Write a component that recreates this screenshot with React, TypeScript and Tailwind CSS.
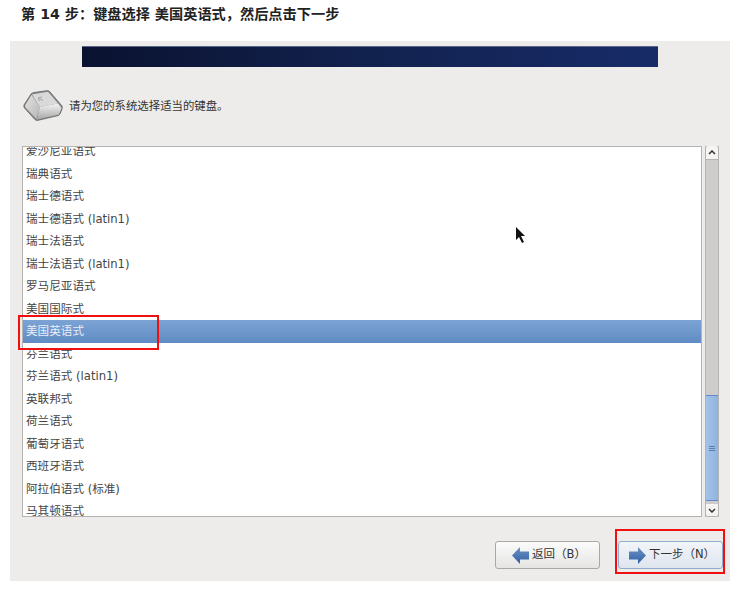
const rows = [
  '爱沙尼亚语式',
  '瑞典语式',
  '瑞士德语式',
  '瑞士德语式 (latin1)',
  '瑞士法语式',
  '瑞士法语式 (latin1)',
  '罗马尼亚语式',
  '美国国际式',
  '美国英语式',
  '芬兰语式',
  '芬兰语式 (latin1)',
  '英联邦式',
  '荷兰语式',
  '葡萄牙语式',
  '西班牙语式',
  '阿拉伯语式 (标准)',
  '马其顿语式',
]

const KeyIcon = () => (
  <svg width="40" height="31" viewBox="0 0 40 31">
    <defs>
      <linearGradient id="keyFront" x1="0" y1="0" x2="0" y2="1">
        <stop offset="0" stopColor="#f4f4f4" />
        <stop offset="1" stopColor="#a6a6a6" />
      </linearGradient>
      <linearGradient id="keySide" x1="0" y1="0" x2="1" y2="1">
        <stop offset="0" stopColor="#e4e4e4" />
        <stop offset="1" stopColor="#b4b4b4" />
      </linearGradient>
    </defs>
    <path d="M1 15 L8 4 Q9 3 11 2.5 L24 0.7 Q26 0.5 27 2 L39 16 Q39.6 17 39 19 L37 24 Q36.5 25 35 25.6 L15 30.3 Q13 30.7 12 29.6 L1.5 18 Q0.6 17 1 15 Z" fill="#8a8a8a" stroke="#5c5c5c" strokeWidth="0.8" />
    <path d="M2 15.5 L8.5 5 L17 17 L13.5 29 L2.5 17.5 Z" fill="url(#keySide)" />
    <path d="M9 4.5 L25 1.8 L35 13.5 L17 17 Z" fill="#d9d9d9" />
    <path d="M17 17 L35 13.5 L38.5 18 L36 24.5 L14 29.6 Z" fill="url(#keyFront)" />
    <path d="M15 8 L19 7 M15.5 8 L16.5 11 M17 9 L20 10.5" stroke="#9a9a9a" strokeWidth="0.9" fill="none" />
  </svg>
)

const ArrowIcon = ({ dir }: { dir: 'left' | 'right' }) => (
  <svg width="17" height="17" viewBox="0 0 17 17">
    <defs>
      <linearGradient id={`arrow-${dir}`} x1="0" y1="0" x2="0" y2="1">
        <stop offset="0" stopColor="#6f94c6" />
        <stop offset="1" stopColor="#2f5fa3" />
      </linearGradient>
    </defs>
    <path
      d={dir === 'left' ? 'M0 8.5 L8 0 L8 4.5 L17 4.5 L17 12.5 L8 12.5 L8 17 Z' : 'M17 8.5 L9 0 L9 4.5 L0 4.5 L0 12.5 L9 12.5 L9 17 Z'}
      fill={`url(#arrow-${dir})`}
    />
  </svg>
)

const App = () => {
  return (
    <div className="relative h-[593px] w-[749px] overflow-hidden bg-white font-['DejaVu_Sans','Noto_Sans_CJK_SC',sans-serif]">
      <h1 className="h-[41px] pl-[21px] pt-[5px] text-[14.2px] font-bold leading-[18px] text-[#222]">
        第 14 步：键盘选择 美国英语式，然后点击下一步
      </h1>

      <div className="ml-[10px] flex h-[540px] w-[720px] flex-col bg-[#edecea]">
        <div className="ml-[72px] mt-[5px] h-[21px] w-[576px] border-t border-[#5a6788] bg-gradient-to-r from-[#0a1230] via-[#12224f] to-[#172b68]" />

        <div className="ml-[13px] mt-[23px] flex h-[31px] items-center gap-[6px]">
          <KeyIcon />
          <p className="pt-[2px] text-[11.4px] text-[#333]">请为您的系统选择适当的键盘。</p>
        </div>

        <div className="ml-[12px] mt-[25px] flex h-[371px] w-[697px] gap-[3px]">
          <div className="h-full w-[680px] overflow-hidden border border-[#b5b3b1] bg-white">
            <div className="-mt-[7px]">
              {rows.map((row) => (
                <div
                  key={row}
                  className={
                    row === '美国英语式'
                      ? 'flex h-[22.5px] items-center bg-gradient-to-b from-[#7da3d4] to-[#5f8cc4] pl-[3px] pt-[1px] text-[11.6px] text-[#e8eef7]'
                      : 'flex h-[22.5px] items-center pl-[3px] pt-[1px] text-[11.6px] text-[#444]'
                  }
                >
                  {row}
                </div>
              ))}
            </div>
          </div>

          <div className="flex h-full w-[14px] flex-col border-x border-[#b5b3b1] bg-[#cfcdcb]">
            <div className="flex h-[14px] items-center justify-center rounded-t-[3px] border-b border-[#b5b3b1] bg-[#f5f4f3]">
              <svg width="8" height="5" viewBox="0 0 8 5">
                <path d="M1 4 L4 1 L7 4" fill="none" stroke="#333" strokeWidth="1.5" />
              </svg>
            </div>
            <div className="flex-1" />
            <div className="flex h-[106px] items-center justify-center border-y border-[#5f8cc4] bg-gradient-to-r from-[#a4c2e8] to-[#8fb3e0]">
              <div className="flex w-[6px] flex-col gap-[1px]">
                <div className="h-px bg-[#5a7fb3]" />
                <div className="h-px bg-[#5a7fb3]" />
                <div className="h-px bg-[#5a7fb3]" />
              </div>
            </div>
            <div className="h-[3px] bg-[#cfcdcb]" />
            <div className="flex h-[13px] items-center justify-center rounded-b-[3px] border-b border-[#b5b3b1] bg-[#f5f4f3]">
              <svg width="8" height="5" viewBox="0 0 8 5">
                <path d="M1 1 L4 4 L7 1" fill="none" stroke="#333" strokeWidth="1.5" />
              </svg>
            </div>
          </div>
        </div>

        <div className="ml-[485px] mt-[24px] flex gap-[18px]">
          <button className="flex h-[28px] w-[105px] items-center justify-center gap-[3px] rounded-[3px] border border-[#aaa8a6] bg-gradient-to-b from-[#fbfbfb] to-[#e6e5e4] pl-[3px] text-[11.5px] text-[#333]">
            <ArrowIcon dir="left" />
            返回（B）
          </button>
          <button className="flex h-[28px] w-[105px] items-center justify-center gap-[3px] rounded-[3px] border border-[#8fadd0] bg-gradient-to-b from-[#f2f5f9] to-[#dfe5ee] pl-[3px] text-[11.5px] text-[#333]">
            <ArrowIcon dir="right" />
            下一步（N）
          </button>
        </div>
      </div>

      {/* annotations drawn on top of the screenshot */}
      <div className="absolute left-[18px] top-[315px] h-[35px] w-[141px] border-2 border-[#f01010]" />
      <div className="absolute left-[615px] top-[529px] h-[45px] w-[110px] border-2 border-[#f01010]" />

      <svg className="absolute left-[515px] top-[227px]" width="12" height="18" viewBox="0 0 12 18">
        <path d="M1 0 L1 13 L4 10 L7 16 L9 15 L6 9 L10 9 Z" fill="#111" />
      </svg>
    </div>
  )
}

export default App
